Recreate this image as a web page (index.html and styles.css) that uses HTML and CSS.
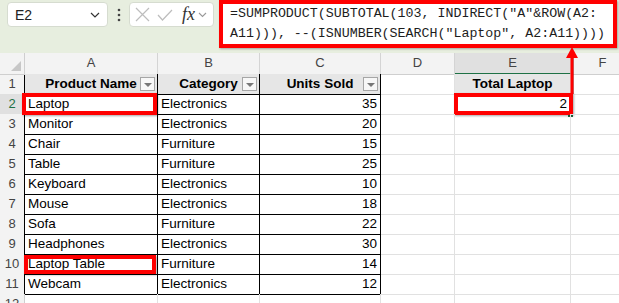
FILE: index.html
```html
<!DOCTYPE html>
<html lang="en">
<head>
    <meta charset="UTF-8">
    <title>SUMPRODUCT visible rows</title>
    <link rel="stylesheet" href="styles.css">
</head>
<body>
    <div class="app">
        <div class="formula-bar">
            <div class="name-box">
                <span>E2</span>
                <svg class="chev" width="10" height="6" viewBox="0 0 10 6"><path d="M1 1l4 4 4-4" fill="none" stroke="#333" stroke-width="1.2"/></svg>
            </div>
            <div class="dots">
                <svg width="4" height="14" viewBox="0 0 4 14"><circle cx="2" cy="2" r="1.3" fill="#444"/><circle cx="2" cy="7" r="1.3" fill="#444"/><circle cx="2" cy="12" r="1.3" fill="#444"/></svg>
            </div>
            <div class="fx-box">
                <svg width="15" height="15" viewBox="0 0 15 15"><path d="M1 1l13 13M14 1L1 14" stroke="#bdbdbd" stroke-width="1.2" fill="none"/></svg>
                <svg width="16" height="12" viewBox="0 0 16 12"><path d="M1 6l4.5 5L15 1" stroke="#bdbdbd" stroke-width="1.2" fill="none"/></svg>
                <span class="fx">fx</span>
                <svg width="9" height="6" viewBox="0 0 9 6"><path d="M1 1l3.5 3.5L8 1" fill="none" stroke="#999" stroke-width="1.1"/></svg>
            </div>
            <div class="formula">=SUMPRODUCT(SUBTOTAL(103, INDIRECT("A"&amp;ROW(A2:<br>A11))), --(ISNUMBER(SEARCH("Laptop", A2:A11))))</div>
        </div>

        <div class="sheet">
            <div class="row">
                <div class="corner"><span class="corner-tri"></span></div>
                <div class="ch top">A</div>
                <div class="ch top">B</div>
                <div class="ch top">C</div>
                <div class="ch">D</div>
                <div class="ch sel">E</div>
                <div class="ch">F</div>
            </div>
            <div class="row">
                <div class="rh in">1</div>
                <div class="c t th">Product Name<span class="filter"></span></div>
                <div class="c t th">Category<span class="filter"></span></div>
                <div class="c t th">Units Sold<span class="filter"></span></div>
                <div class="c"></div>
                <div class="c th">Total Laptop</div>
                <div class="c"></div>
            </div>
            <div class="row">
                <div class="rh in active">2</div>
                <div class="c t mark mark-a2">Laptop</div>
                <div class="c t">Electronics</div>
                <div class="c t num">35</div>
                <div class="c"></div>
                <div class="c num mark mark-e2">2<span class="handle"></span></div>
                <div class="c"></div>
            </div>
            <div class="row">
                <div class="rh in">3</div>
                <div class="c t">Monitor</div>
                <div class="c t">Electronics</div>
                <div class="c t num">20</div>
                <div class="c"></div><div class="c"></div><div class="c"></div>
            </div>
            <div class="row">
                <div class="rh in">4</div>
                <div class="c t">Chair</div>
                <div class="c t">Furniture</div>
                <div class="c t num">15</div>
                <div class="c"></div><div class="c"></div><div class="c"></div>
            </div>
            <div class="row">
                <div class="rh in">5</div>
                <div class="c t">Table</div>
                <div class="c t">Furniture</div>
                <div class="c t num">25</div>
                <div class="c"></div><div class="c"></div><div class="c"></div>
            </div>
            <div class="row">
                <div class="rh in">6</div>
                <div class="c t">Keyboard</div>
                <div class="c t">Electronics</div>
                <div class="c t num">10</div>
                <div class="c"></div><div class="c"></div><div class="c"></div>
            </div>
            <div class="row">
                <div class="rh in">7</div>
                <div class="c t">Mouse</div>
                <div class="c t">Electronics</div>
                <div class="c t num">18</div>
                <div class="c"></div><div class="c"></div><div class="c"></div>
            </div>
            <div class="row">
                <div class="rh in">8</div>
                <div class="c t">Sofa</div>
                <div class="c t">Furniture</div>
                <div class="c t num">22</div>
                <div class="c"></div><div class="c"></div><div class="c"></div>
            </div>
            <div class="row">
                <div class="rh in">9</div>
                <div class="c t">Headphones</div>
                <div class="c t">Electronics</div>
                <div class="c t num">30</div>
                <div class="c"></div><div class="c"></div><div class="c"></div>
            </div>
            <div class="row">
                <div class="rh in">10</div>
                <div class="c t mark mark-a10">Laptop Table</div>
                <div class="c t">Furniture</div>
                <div class="c t num">14</div>
                <div class="c"></div><div class="c"></div><div class="c"></div>
            </div>
            <div class="row">
                <div class="rh in">11</div>
                <div class="c t">Webcam</div>
                <div class="c t">Electronics</div>
                <div class="c t num">12</div>
                <div class="c"></div><div class="c"></div><div class="c"></div>
            </div>
            <div class="row">
                <div class="rh">12</div>
                <div class="c"></div><div class="c"></div><div class="c"></div>
                <div class="c"></div><div class="c"></div><div class="c"></div>
            </div>
        </div>

        <!-- callout arrow from E2 up to the formula -->
        <svg class="arrow" width="20" height="52" viewBox="0 0 20 52">
            <rect x="10" y="12" width="2" height="38" fill="rgba(0,0,0,0.35)"/>
            <rect x="8.5" y="12" width="3" height="38" fill="#f00"/>
            <polygon points="10,3 4,14 16,14" fill="#f00"/>
        </svg>
    </div>
</body>
</html>
```

FILE: styles.css
```css
html, body {
    margin: 0;
    padding: 0;
}
body {
    width: 619px;
    height: 303px;
    overflow: hidden;
    background: #fff;
    font-family: "Liberation Sans", Arial, sans-serif;
    color: #000;
}
.app {
    position: relative;
}
.formula-bar {
    height: 53px;
    box-sizing: border-box;
    background: #e7eedf;
    display: flex;
    align-items: flex-start;
    padding-left: 7px;
}
.name-box {
    margin-top: 2px;
    width: 101px;
    height: 25px;
    box-sizing: border-box;
    background: #fff;
    border: 1px solid #d6dcd0;
    border-radius: 4px;
    display: flex;
    align-items: center;
    justify-content: space-between;
    padding: 0 7px 0 7px;
    font-size: 14px;
    color: #222;
}
.dots {
    width: 21px;
    height: 29px;
    display: flex;
    align-items: center;
    justify-content: center;
}
.fx-box {
    margin-top: 2px;
    width: 85px;
    height: 25px;
    box-sizing: border-box;
    background: #fff;
    border: 1px solid #d6dcd0;
    border-radius: 4px;
    display: flex;
    align-items: center;
    gap: 7px;
    padding-left: 5px;
}
.fx {
    font-family: "Liberation Serif", "Times New Roman", serif;
    font-style: italic;
    font-size: 18px;
    color: #333;
    margin-left: 2px;
    margin-right: -4px;
}
.formula {
    margin-left: 5px;
    width: 398px;
    box-sizing: border-box;
    background: #fff;
    border: 4px solid #f00;
    padding-left: 7px;
    font-family: "Liberation Mono", "Courier New", monospace;
    font-size: 13.3px;
    line-height: 20px;
    color: #1d1d1d;
    white-space: nowrap;
    box-shadow: 1px 1px 2px rgba(0, 0, 0, 0.3);
}
.row {
    display: grid;
    grid-template-columns: 25px 133px 102px 121px 74px 116px 64px;
    height: 20px;
}
.row:first-child {
    height: 21px;
}
.corner, .ch, .rh {
    background: #f3f3f3;
    color: #444;
    box-sizing: border-box;
    font-size: 13px;
}
.corner {
    position: relative;
    border-right: 1px solid #cfcfcf;
    border-bottom: 1px solid #cfcfcf;
}
.corner-tri {
    position: absolute;
    right: 3px;
    bottom: 3px;
    width: 0;
    height: 0;
    border-left: 10px solid transparent;
    border-bottom: 10px solid #c7c7c7;
}
.ch {
    text-align: center;
    line-height: 20px;
    border-right: 1px solid #d4d4d4;
    border-bottom: 1px solid #cfcfcf;
}
.ch.top {
    border-bottom-color: #000;
}
.ch.sel {
    background: #e0e0e0;
    border-bottom: 2px solid #1e7145;
}
.rh {
    text-align: center;
    line-height: 20px;
    border-right: 1px solid #cfcfcf;
    border-bottom: 1px solid #dadada;
}
.rh.in {
    border-right-color: #000;
}
.rh.active {
    background: #e0e0e0;
    color: #1e7145;
}
.c {
    position: relative;
    box-sizing: border-box;
    border-right: 1px solid #e1e1e1;
    border-bottom: 1px solid #e1e1e1;
    padding: 0 3px;
    font-size: 13.5px;
    line-height: 20px;
    white-space: nowrap;
}
.c.t {
    border-right-color: #000;
    border-bottom-color: #000;
}
.th {
    background: #e6e6e6;
    font-weight: bold;
    text-align: center;
}
.num {
    text-align: right;
}
.filter {
    position: absolute;
    right: 2px;
    top: 3px;
    width: 15px;
    height: 14px;
    box-sizing: border-box;
    border: 1px solid #a6a6a6;
    background: #f7f7f7;
}
.filter::after {
    content: "";
    position: absolute;
    left: 3px;
    top: 5px;
    border-left: 4px solid transparent;
    border-right: 4px solid transparent;
    border-top: 4px solid #777;
}
.handle {
    position: absolute;
    right: -3px;
    bottom: -3px;
    width: 5px;
    height: 5px;
    background: #1e7145;
}
.mark::after {
    content: "";
    position: absolute;
    border: 4px solid #f00;
    box-shadow: 1px 1px 2px rgba(0, 0, 0, 0.35);
}
.mark-a2::after {
    top: -1px;
    right: 0;
    bottom: -1px;
    left: -3px;
}
.mark-a10::after {
    top: 1px;
    right: 1px;
    bottom: 0;
    left: -1px;
}
.mark-e2::after {
    top: -1px;
    right: -3px;
    bottom: -1px;
    left: -1px;
}
.arrow {
    position: absolute;
    left: 562px;
    top: 44px;
}
```
